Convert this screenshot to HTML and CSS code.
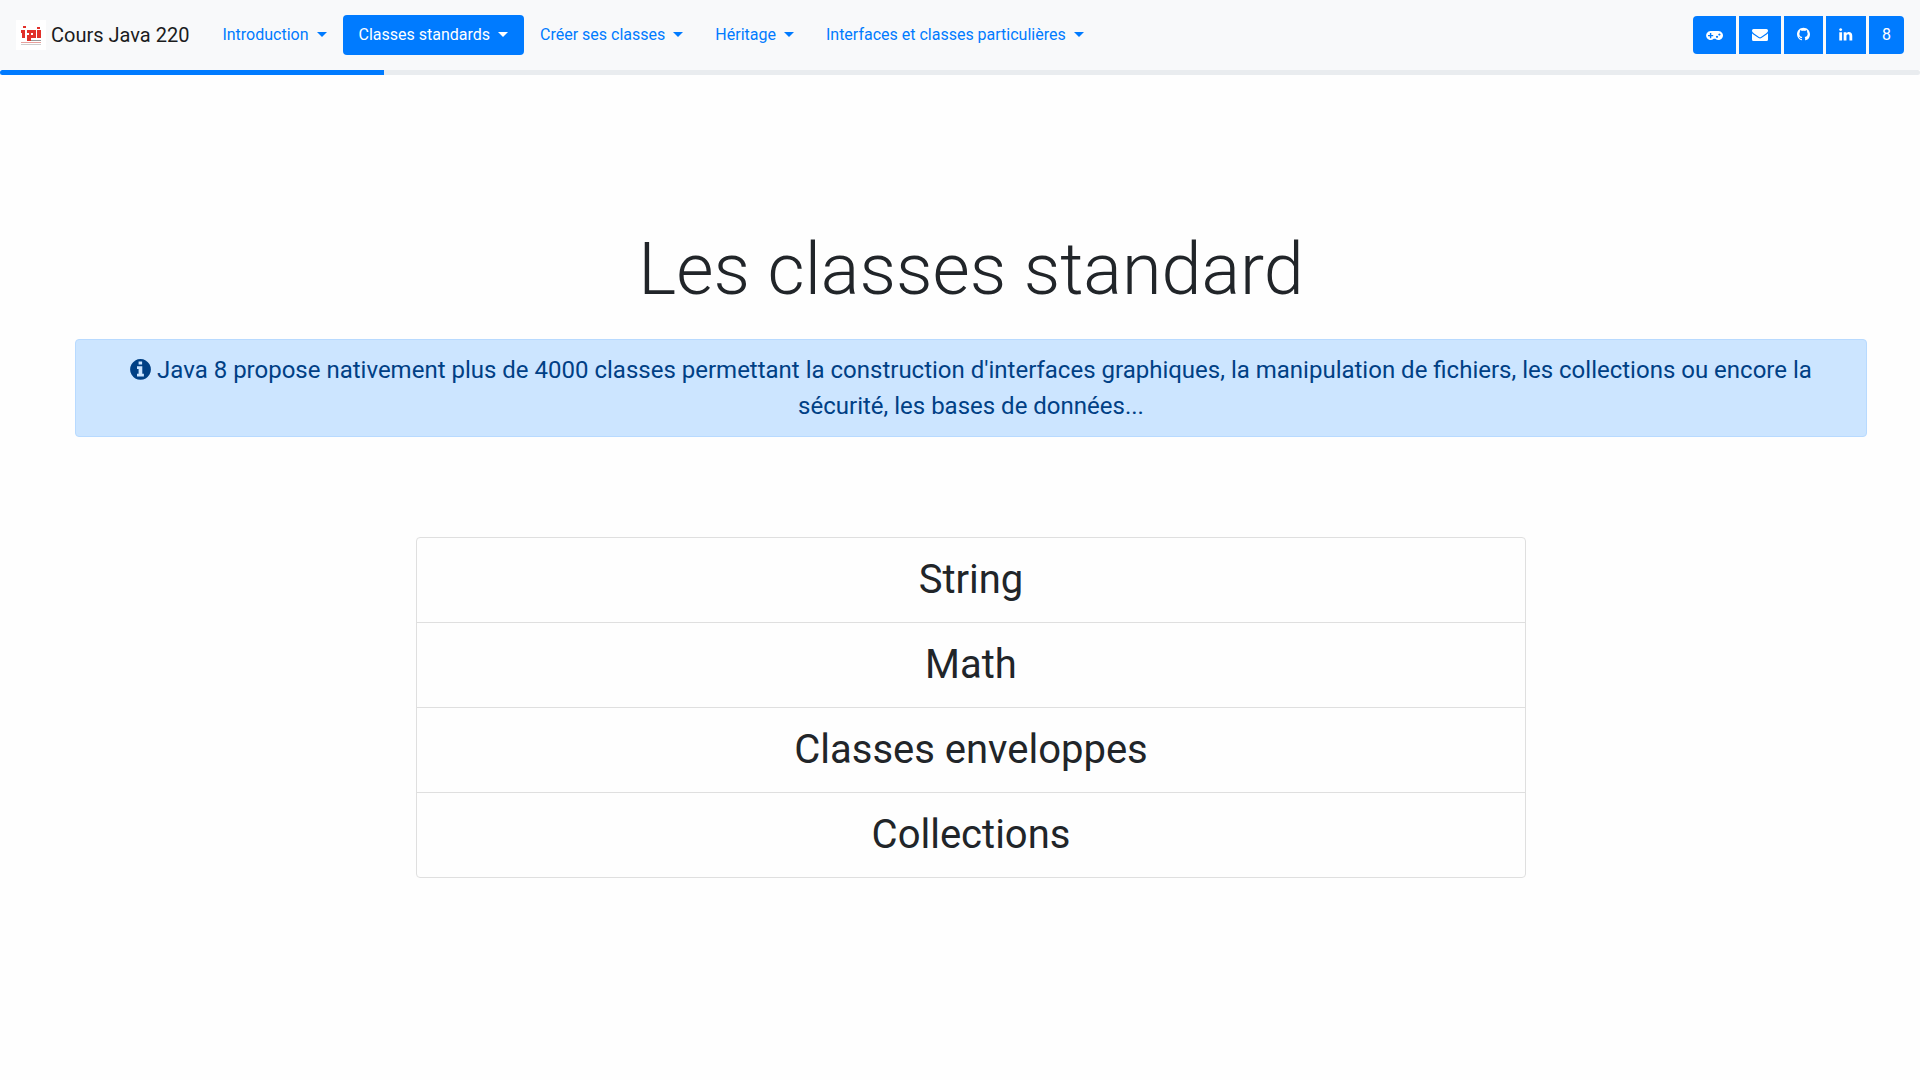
FILE: index.html
```html
<!DOCTYPE html>
<html lang="fr">
<head>
<meta charset="utf-8">
<title>Cours Java 220</title>
<link rel="stylesheet" href="styles.css">
</head>
<body>
<header class="navbar">
  <a class="brand" href="#">
    <svg class="brand-logo" viewBox="0 0 30 30" aria-hidden="true">
      <path fill="#fff" d="M0 0h30v30H0z"/>
      <path fill="#e1302a" d="M7 6h3v2H7zM5 10h4v8H6v-5H5zM11 10h9v8h-5v3h-4v-6h2v-2h-2zM21 7h3v2h-3zM21 10h4v8h-4z"/>
      <path fill="#fff" d="M15 13h2v2h-2z"/>
      <path fill="#999" d="M15 20h10v1H15z"/>
      <path fill="#e6a09c" d="M5 22h20v1H5z"/>
      <path fill="#ccc" d="M5 24h20v1H5z"/>
    </svg>
    Cours Java 220
  </a>
  <nav class="nav">
    <button class="nav-item" type="button">Introduction<span class="caret"></span></button>
    <button class="nav-item active" type="button">Classes standards<span class="caret"></span></button>
    <button class="nav-item" type="button">Créer ses classes<span class="caret"></span></button>
    <button class="nav-item" type="button">Héritage<span class="caret"></span></button>
    <button class="nav-item" type="button">Interfaces et classes particulières<span class="caret"></span></button>
  </nav>
  <div class="tools">
    <a class="tool" href="#" aria-label="Jeu"><svg width="17" height="16" viewBox="0 0 17 16"><path fill="currentColor" fill-rule="evenodd" d="M4.600 4h7.900a4.500 4.500 0 1 1-3.100 7.800H7.700A4.500 4.500 0 1 1 4.600 4zM3.900 6v1.900H2v1.400h1.900v1.900h1.400V9.300h1.900V7.900H5.300V6zM11 8.700a1.100 1.100 0 1 0 .01 0zM13.400 6.400a1.100 1.100 0 1 0 .01 0z"/></svg></a>
    <a class="tool" href="#" aria-label="Courriel"><svg width="16" height="16" viewBox="0 0 16 16"><path fill="currentColor" d="M1.500 2h13A1.500 1.500 0 0 1 16 3.500C16 5 15 5.700 14 6.400L9.300 9.700C8.800 10 8.400 10.300 8 10.300S7.200 10 6.700 9.700L2 6.400C1 5.700 0 5 0 3.500A1.500 1.500 0 0 1 1.500 2zM0 6.300c.3.300.6.600 1 .9l5.200 3.600c.6.400 1.200.7 1.800.7s1.200-.3 1.800-.7L15 7.200c.4-.3.700-.6 1-.9v6.200a1.500 1.500 0 0 1-1.500 1.500h-13A1.500 1.500 0 0 1 0 12.500z"/></svg></a>
    <a class="tool" href="#" aria-label="GitHub"><svg width="13" height="16" viewBox="0 0 16 18"><path fill="currentColor" d="M8 0C3.580 0 0 3.580 0 8c0 3.540 2.290 6.530 5.470 7.590.4.070.55-.17.55-.38 0-.19-.01-.82-.01-1.490-2.010.37-2.530-.49-2.690-.94-.09-.23-.48-.94-.82-1.130-.28-.15-.68-.52-.01-.53.63-.01 1.080.58 1.230.82.72 1.210 1.870.87 2.330.66.07-.52.28-.87.51-1.070-1.780-.2-3.640-.89-3.640-3.950 0-.87.31-1.590.82-2.150-.08-.2-.36-1.020.08-2.120 0 0 .67-.21 2.200.82.64-.18 1.320-.27 2-.27s1.360.09 2 .27c1.530-1.040 2.200-.82 2.200-.82.44 1.100.16 1.920.08 2.120.51.56.82 1.270.82 2.150 0 3.070-1.870 3.750-3.650 3.950.29.25.54.73.54 1.480 0 1.070-.01 1.930-.01 2.200 0 .21.15.46.55.38A8.010 8.010 0 0 0 16 8c0-4.420-3.580-8-8-8z"/></svg></a>
    <a class="tool" href="#" aria-label="LinkedIn"><svg width="14" height="16" viewBox="0 0 15 16"><path fill="currentColor" d="M.3 5h3v9h-3zM1.800.7a1.600 1.500 0 1 1-.01 0zM5 5h3v1.300C8.500 5.500 9.300 4.800 10.700 4.800c2.100 0 3.500 1.300 3.500 4V14h-3V9.200c0-1.200-.4-2-1.500-2S8 8 8 9.200V14H5z"/></svg></a>
    <a class="tool" href="#">8</a>
  </div>
</header>
<div class="progress"><div class="progress-bar" style="width:20%"></div></div>
<main class="slide">
  <h1 class="title">Les classes standard</h1>
  <p class="alert"><svg class="info" width="21" height="24" viewBox="0 0 21 24" aria-hidden="true"><path fill="currentColor" fill-rule="evenodd" d="M10.500 1a10.400 10.400 0 1 0 .01 0zM8.600 3.500h3.500v3H8.600zM7 8.200h5.300v7.600h1.600v2.700H7v-2.700h1.600v-4.900H7z"/></svg> Java 8 propose nativement plus de 4000 classes permettant la construction d'interfaces graphiques, la manipulation de fichiers, les collections ou encore la sécurité, les bases de données...</p>
  <ul class="list">
    <li class="list-item">String</li>
    <li class="list-item">Math</li>
    <li class="list-item">Classes enveloppes</li>
    <li class="list-item">Collections</li>
  </ul>
</main>
</body>
</html>
```
FILE: styles.css
```css
*, *::before, *::after { box-sizing: border-box; }
body {
  margin: 0;
  background: #fefefe;
  color: #212529;
  font: 400 16px/24px Roboto, "Liberation Sans", sans-serif;
}
.navbar {
  display: flex;
  align-items: center;
  padding: 15px 16px;
  background: #f8f9fa;
}
.brand {
  display: flex;
  align-items: center;
  gap: 5px;
  margin-right: 17px;
  color: #1b1c1d;
  font-size: 20px;
  line-height: 30px;
  white-space: nowrap;
  text-decoration: none;
}
.brand-logo { width: 30px; height: 30px; }
.nav { display: flex; flex: 1; }
.nav-item {
  display: flex;
  align-items: center;
  gap: 8px;
  padding: 8px 16px;
  border: 0;
  border-radius: 4px;
  background: transparent;
  color: #007bff;
  font: inherit;
  white-space: nowrap;
}
.nav-item.active { background: #007bff; color: #fff; }
.caret {
  border: 5px solid transparent;
  border-top-color: currentColor;
  border-bottom: 0;
  margin-bottom: 2px;
}
.tools { display: flex; gap: 3px; }
.tool {
  display: flex;
  align-items: center;
  padding: 7px 13px;
  background: #007bff;
  color: #fff;
  text-decoration: none;
}
.tool:first-child { border-radius: 4px 0 0 4px; }
.tool:last-child { border-radius: 0 4px 4px 0; }
.progress {
  height: 5px;
  overflow: hidden;
  border-radius: 4px;
  background: #e9ecef;
}
.progress-bar { height: 100%; background: #007bff; }
.slide {
  padding: 152px 53px 0 75px;
  text-align: center;
}
.title {
  margin: 0 0 26px;
  font-size: 72px;
  font-weight: 300;
  line-height: 86px;
}
.alert {
  margin: 0;
  padding: 12px 20px;
  border: 1px solid #b8daff;
  border-radius: 4px;
  background: #cce5ff;
  color: #004085;
  font-size: 24px;
  line-height: 36px;
}
.info { vertical-align: -4px; }
.list {
  max-width: 1110px;
  margin: 100px auto 0;
  padding: 0;
  border: 1px solid #dfdfdf;
  border-radius: 4px;
  list-style: none;
}
.list-item {
  padding: 12px 20px;
  font-size: 40px;
  line-height: 60px;
}
.list-item + .list-item { border-top: 1px solid #dfdfdf; }
```
